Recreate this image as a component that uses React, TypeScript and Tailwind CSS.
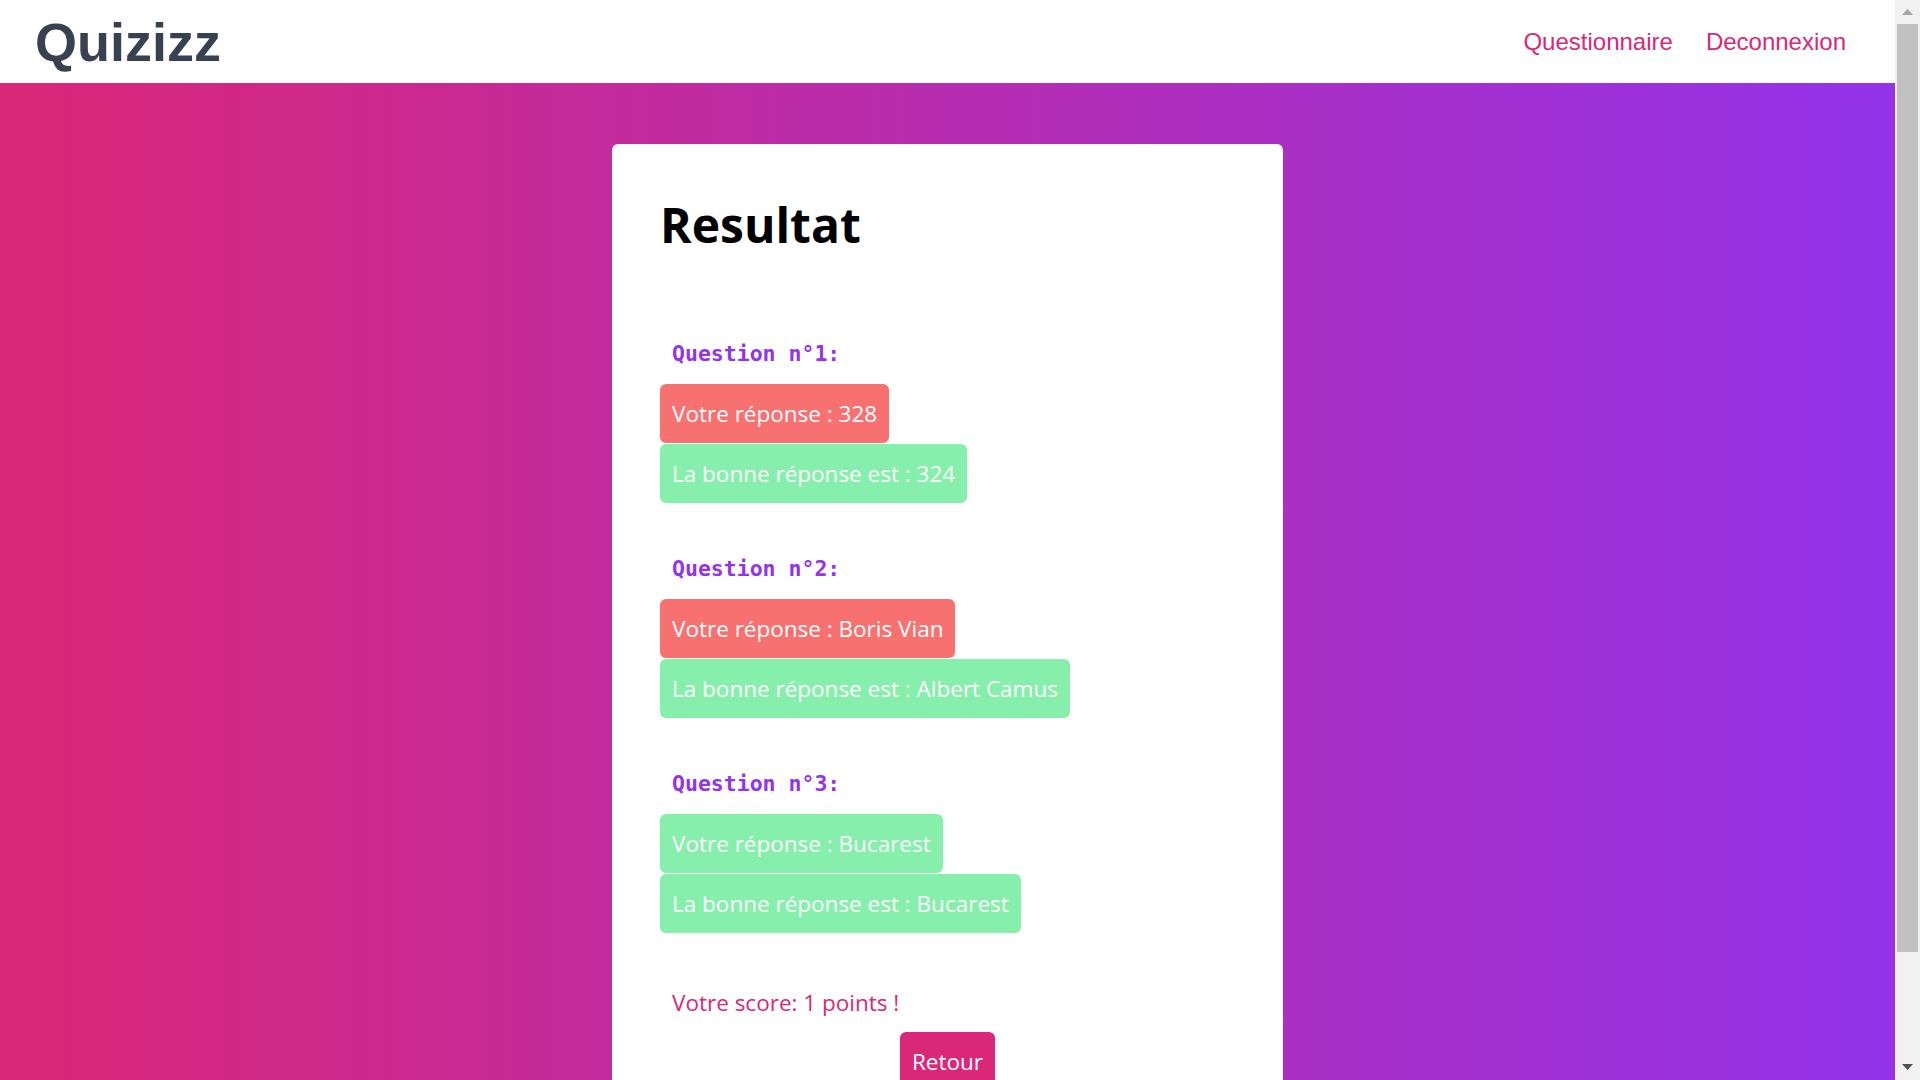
const results = [
  { n: 1, given: "328", correct: "324", ok: false },
  { n: 2, given: "Boris Vian", correct: "Albert Camus", ok: false },
  { n: 3, given: "Bucarest", correct: "Bucarest", ok: true },
];

function Scrollbar() {
  return (
    <div className="fixed right-0 top-0 flex h-screen w-[25px] flex-col items-center bg-[#f1f1f1]">
      <div className="flex h-6 items-center justify-center">
        <svg width="11" height="6" viewBox="0 0 11 6">
          <path d="M0 6 L5.5 0 L11 6 Z" fill="#a3a3a3" />
        </svg>
      </div>
      <div className="h-[928px] w-[21px] bg-[#c1c1c1]" />
      <div className="flex flex-1 items-end justify-center pb-[10px]">
        <svg width="11" height="6" viewBox="0 0 11 6">
          <path d="M0 0 L11 0 L5.5 6 Z" fill="#505050" />
        </svg>
      </div>
    </div>
  );
}

export default function App() {
  return (
    <div className="flex min-h-screen flex-col pr-[25px]">
      {/* top bar */}
      <header className="flex h-[83px] items-center justify-between bg-white pl-[35px] pr-[49px]">
        <h1 className="font-['Liberation_Sans',Arial,sans-serif] text-[54px] font-bold leading-none text-[#374151]">
          Quizizz
        </h1>
        <nav className="flex gap-[33px] font-['Liberation_Sans',Arial,sans-serif] text-2xl leading-8 text-[#db2777]">
          <a href="#">Questionnaire</a>
          <a href="#">Deconnexion</a>
        </nav>
      </header>

      <main className="flex flex-1 justify-center bg-linear-to-r/srgb from-[#db2777] to-[#9333ea] pb-[61px] pt-[61px]">
        <div className="w-[671px] rounded-md bg-white p-12 font-['Open_Sans','Noto_Sans',sans-serif]">
          <h2 className="mt-[9px] text-5xl font-bold leading-none text-black">Resultat</h2>

          <div className="mt-[89px] flex flex-col gap-[50px]">
            {results.map((r) => (
              <div key={r.n}>
                <p className="mb-[14px] px-3 font-['DejaVu_Sans_Mono','Liberation_Mono',monospace] text-[21.5px] font-bold leading-8 text-[#9333ea]">
                  Question n°{r.n}:
                </p>
                <div className="flex flex-col items-start gap-px">
                  <span
                    className={
                      "rounded-md px-3 py-3 text-[22.5px] leading-[35px] text-white " +
                      (r.ok ? "bg-[#86efac]" : "bg-[#f87171]")
                    }
                  >
                    Votre réponse : {r.given}
                  </span>
                  <span className="rounded-md bg-[#86efac] px-3 py-3 text-[22.5px] leading-[35px] text-white">
                    La bonne réponse est : {r.correct}
                  </span>
                </div>
              </div>
            ))}
          </div>

          <p className="mt-[54px] px-3 text-[22.5px] leading-8 text-[#db2777]">Votre score: 1 points !</p>
          <div className="mt-[13px] flex justify-center">
            <button className="rounded-md bg-[#db2777] px-3 py-3 text-[22.5px] leading-[35px] text-white">
              Retour
            </button>
          </div>
        </div>
      </main>

      <Scrollbar />
    </div>
  );
}
